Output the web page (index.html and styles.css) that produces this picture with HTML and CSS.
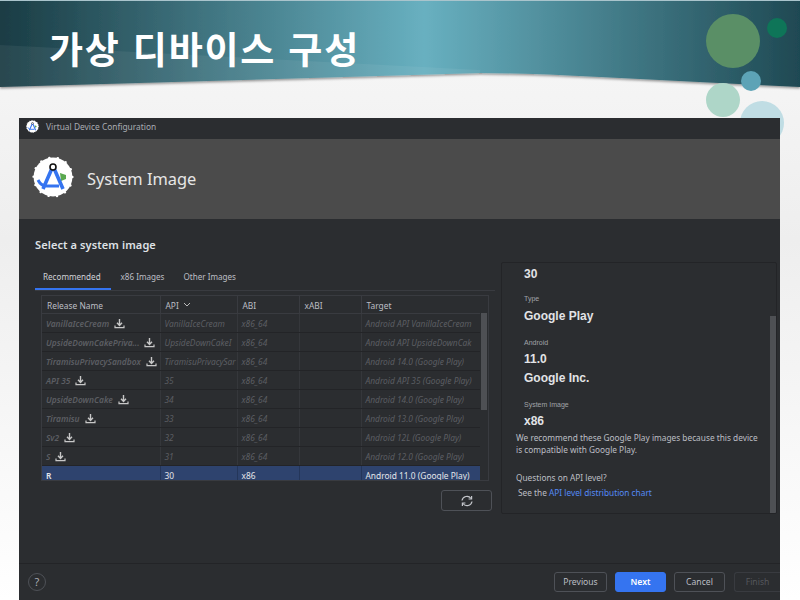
FILE: index.html

```html
<!DOCTYPE html>
<html lang="ko">
<head>
    <meta charset="UTF-8">
    <meta name="viewport" content="width=device-width, initial-scale=1.0">
    <link rel="stylesheet" href="styles.css">
    <title>가상 디바이스 구성</title>
</head>
<body>

<div class="slide">
    <svg class="slide-art" width="800" height="600" viewBox="0 0 800 600">
        <defs>
            <linearGradient id="bannerGrad" x1="0" y1="0" x2="1" y2="0">
                <stop offset="0" stop-color="#1a3c44"/>
                <stop offset="0.53" stop-color="#68b0c0"/>
                <stop offset="1" stop-color="#1f4953"/>
            </linearGradient>
            <linearGradient id="pageGrad" x1="0" y1="0" x2="0" y2="1">
                <stop offset="0" stop-color="#f8f8f8"/>
                <stop offset="0.4" stop-color="#eeeeee"/>
                <stop offset="1" stop-color="#ffffff"/>
            </linearGradient>
            <filter id="bannerShadow" x="-5%" y="-5%" width="110%" height="125%">
                <feDropShadow dx="0" dy="1.5" stdDeviation="1" flood-color="#000" flood-opacity="0.4"/>
            </filter>
        </defs>
        <rect width="800" height="600" fill="url(#pageGrad)"/>
        <path d="M0 0H800V87L600 77Q530 73 480 73L0 87Z" fill="url(#bannerGrad)" filter="url(#bannerShadow)"/>
        <path d="M0 45L480 70L480 73L0 87Z" fill="#fff" opacity="0.06"/>
        <rect width="800" height="1" fill="#a9c4cc"/>
        <circle cx="733" cy="41" r="27" fill="#5a8f66"/>
        <circle cx="777" cy="28" r="10" fill="#0e7558"/>
        <circle cx="751" cy="81" r="10" fill="#5da3b6"/>
        <circle cx="723" cy="100" r="17" fill="#aed6c8"/>
        <circle cx="762" cy="123" r="22" fill="#c0dde4"/>
    </svg>

    <h1 class="slide-title">가상 디바이스 구성</h1>

    <div class="window">
        <div class="titlebar">
            <svg class="titlebar-logo" width="13" height="13" viewBox="0 0 42 42">
                <use href="#studioLogo"/>
            </svg>
            <span>Virtual Device Configuration</span>
        </div>

        <div class="wizard-header">
            <svg width="42" height="42" viewBox="0 0 42 42">
                <g id="studioLogo">
                    <circle cx="21" cy="21" r="19.4" fill="#fff" stroke="#fff" stroke-width="2.4" stroke-linecap="round" stroke-dasharray="0.1 8.6"/>
                    <path d="M34 19l-6-2 1 8 5-2z" fill="#5aa84f"/>
                    <path d="M21 10L11 33M21 10L31 33" stroke="#3574f0" stroke-width="3.6" fill="none"/>
                    <path d="M6 24c2 4 5 6 9 6h12" stroke="#3574f0" stroke-width="3" fill="none"/>
                    <circle cx="21" cy="11" r="3" fill="#fff" stroke="#111" stroke-width="1.6"/>
                </g>
            </svg>
            <span class="wizard-title">System Image</span>
        </div>

        <div class="wizard-body">
            <h2 class="section-title">Select a system image</h2>
            <div class="columns">
                <div class="left-col">
                    <div class="tabs">
                        <span class="tab tab-active">Recommended</span>
                        <span class="tab">x86 Images</span>
                        <span class="tab">Other Images</span>
                    </div>
                    <div class="table-wrap">
                        <table class="images">
                            <colgroup>
                                <col class="col-name"><col class="col-api"><col class="col-abi"><col class="col-xabi"><col class="col-target">
                            </colgroup>
                            <thead>
                                <tr>
                                    <th>Release Name</th>
                                    <th>API <svg class="sort" width="8" height="5" viewBox="0 0 8 5"><path d="M1 1l3 3 3-3" fill="none" stroke="#bbb"/></svg></th>
                                    <th>ABI</th>
                                    <th>xABI</th>
                                    <th>Target</th>
                                </tr>
                            </thead>
                            <tbody>
                                <tr>
                                    <td><span class="rel">VanillaIceCream</span><svg class="dl"><use href="#dlIcon"/></svg></td>
                                    <td>VanillaIceCream</td><td>x86_64</td><td></td><td>Android API VanillaIceCream</td>
                                </tr>
                                <tr>
                                    <td><span class="rel">UpsideDownCakePriva...</span><svg class="dl"><use href="#dlIcon"/></svg></td>
                                    <td>UpsideDownCakeI</td><td>x86_64</td><td></td><td>Android API UpsideDownCak</td>
                                </tr>
                                <tr>
                                    <td><span class="rel">TiramisuPrivacySandbox</span><svg class="dl"><use href="#dlIcon"/></svg></td>
                                    <td>TiramisuPrivacySar</td><td>x86_64</td><td></td><td>Android 14.0 (Google Play)</td>
                                </tr>
                                <tr>
                                    <td><span class="rel">API 35</span><svg class="dl"><use href="#dlIcon"/></svg></td>
                                    <td>35</td><td>x86_64</td><td></td><td>Android API 35 (Google Play)</td>
                                </tr>
                                <tr>
                                    <td><span class="rel">UpsideDownCake</span><svg class="dl"><use href="#dlIcon"/></svg></td>
                                    <td>34</td><td>x86_64</td><td></td><td>Android 14.0 (Google Play)</td>
                                </tr>
                                <tr>
                                    <td><span class="rel">Tiramisu</span><svg class="dl"><use href="#dlIcon"/></svg></td>
                                    <td>33</td><td>x86_64</td><td></td><td>Android 13.0 (Google Play)</td>
                                </tr>
                                <tr>
                                    <td><span class="rel">Sv2</span><svg class="dl"><use href="#dlIcon"/></svg></td>
                                    <td>32</td><td>x86_64</td><td></td><td>Android 12L (Google Play)</td>
                                </tr>
                                <tr>
                                    <td><span class="rel">S</span><svg class="dl"><use href="#dlIcon"/></svg></td>
                                    <td>31</td><td>x86_64</td><td></td><td>Android 12.0 (Google Play)</td>
                                </tr>
                                <tr class="selected">
                                    <td><span class="rel-sel">R</span></td>
                                    <td>30</td><td>x86</td><td></td><td>Android 11.0 (Google Play)</td>
                                </tr>
                            </tbody>
                        </table>
                        <div class="table-scrollbar"><div class="table-thumb"></div></div>
                    </div>
                    <div class="refresh-row">
                        <button class="refresh-btn">
                            <svg width="14" height="14" viewBox="0 0 14 14" fill="none" stroke="#c4c6cb" stroke-width="1.2">
                                <path d="M2 6.5A5 5 0 0 1 11 4.5"/>
                                <path d="M12 7.5A5 5 0 0 1 3 9.5"/>
                                <path d="M11.6 2v3H8.6"/>
                                <path d="M2.4 12V9h3"/>
                            </svg>
                        </button>
                    </div>
                </div>

                <div class="info-panel">
                    <div class="info-scroll">
                        <div class="info-value info-first">30</div>
                        <div class="info-label">Type</div>
                        <div class="info-value">Google Play</div>
                        <div class="info-label">Android</div>
                        <div class="info-value info-version">11.0</div>
                        <div class="info-value info-vendor">Google Inc.</div>
                        <div class="info-label">System Image</div>
                        <div class="info-value info-last">x86</div>
                        <p class="info-text">We recommend these Google Play images because this device is compatible with Google Play.</p>
                        <p class="info-text info-question">Questions on API level?</p>
                        <p class="info-text info-see">See the <a class="info-link">API level distribution chart</a></p>
                    </div>
                    <div class="info-scrollbar"><div class="info-thumb"></div></div>
                </div>
            </div>
        </div>

        <div class="wizard-footer">
            <span class="help-btn">?</span>
            <div class="footer-actions">
                <button class="btn">Previous</button>
                <button class="btn btn-primary">Next</button>
                <button class="btn btn-cancel">Cancel</button>
                <button class="btn btn-disabled">Finish</button>
            </div>
        </div>
    </div>
</div>

<svg width="0" height="0" class="icon-defs">
    <symbol id="dlIcon" viewBox="0 0 11 11">
        <path d="M5.5 1v6M3 4.8l2.5 2.6L8 4.8" fill="none" stroke="#c8c8c8" stroke-width="1.4"/>
        <path d="M1 7.5v2.2h9V7.5" fill="none" stroke="#c8c8c8" stroke-width="1.2"/>
    </symbol>
</svg>

</body>
</html>
```

FILE: styles.css

```css
body {
    margin: 0;
    font-family: "Noto Sans", "Noto Sans CJK KR", sans-serif;
}
button {
    font-family: inherit;
}
.icon-defs {
    position: absolute;
}
.slide {
    position: relative;
    width: 800px;
    height: 600px;
    overflow: hidden;
    display: flex;
    flex-direction: column;
}
.slide-art {
    position: absolute;
    left: 0;
    top: 0;
}
.slide-title {
    position: relative;
    margin: 0;
    height: 118px;
    box-sizing: border-box;
    padding: 22px 0 0 49px;
    font-family: "Noto Sans CJK KR", sans-serif;
    font-size: 37px;
    line-height: 52px;
    font-weight: 700;
    letter-spacing: 1.8px;
    color: #fff;
}

.window {
    position: relative;
    margin-left: 19px;
    width: 761px;
    height: 482px;
    display: flex;
    flex-direction: column;
    background: #2b2d30;
    color: #c9ccd1;
    overflow: hidden;
}
.titlebar {
    height: 21px;
    flex: none;
    box-sizing: border-box;
    padding: 0 0 4px 7px;
    display: flex;
    align-items: center;
    gap: 7px;
    font-size: 8.4px;
    color: #a9acb2;
    background: #2b2d30;
}
.wizard-header {
    height: 80px;
    flex: none;
    box-sizing: border-box;
    padding: 0 0 4px 13px;
    display: flex;
    align-items: center;
    gap: 13px;
    background: #4b4b4b;
}
.wizard-title {
    margin-top: 2px;
    font-size: 16.4px;
    color: #e6e6e6;
}

.wizard-body {
    flex: 1;
    min-height: 0;
    padding: 0 0 0 16px;
}
.section-title {
    margin: 18px 0 0;
    font-size: 11px;
    line-height: 16px;
    font-weight: 600;
    letter-spacing: 0.1px;
    color: #dfe1e5;
}
.columns {
    display: flex;
    margin-top: 1px;
}
.left-col {
    width: 460px;
    flex: none;
}
.tabs {
    display: flex;
    height: 29px;
    margin-top: 7px;
    border-bottom: 1px solid #393b40;
    width: 460px;
}
.tab {
    padding: 9px 9.5px 0;
    font-size: 8.1px;
    line-height: 14px;
    color: #bcbec4;
}
.tab-active {
    box-sizing: border-box;
    width: 76px;
    height: 29px;
    padding: 9px 8px 0;
    border-bottom: 2px solid #3574f0;
    color: #d0d2d6;
}

.table-wrap {
    position: relative;
    margin: 4px 0 0 6px;
    width: 448px;
    height: 186px;
    border: 1px solid #393b40;
    box-sizing: border-box;
    overflow: hidden;
}
.images {
    border-collapse: collapse;
    table-layout: fixed;
    width: 438px;
    font-size: 8.4px;
}
.col-name { width: 118px; }
.col-api { width: 77px; }
.col-abi { width: 62px; }
.col-xabi { width: 62px; }
.col-target { width: 119px; }
.images th {
    height: 15px;
    padding: 2px 0 0 5px;
    text-align: left;
    font-weight: 400;
    color: #bcbec4;
    border-right: 1px solid #393b40;
    border-bottom: 1px solid #393b40;
    white-space: nowrap;
}
.images th:last-child {
    border-right: none;
}
.sort {
    margin-left: 2px;
    vertical-align: 2px;
}
.images td {
    height: 18px;
    padding: 0 0 0 4px;
    font-style: italic;
    color: #5c5e63;
    border-right: 1px solid #35373b;
    border-bottom: 1px solid #232427;
    white-space: nowrap;
    overflow: hidden;
}
.images td:last-child {
    border-right: none;
}
.rel {
    vertical-align: middle;
    font-weight: 600;
}
.dl {
    width: 11px;
    height: 11px;
    margin-left: 5px;
    vertical-align: middle;
}
.selected td {
    height: 14px;
    padding-top: 2px;
    font-style: normal;
    color: #e4e6ea;
    background: #2e436e;
    border-right-color: #24365a;
    border-bottom: none;
}
.rel-sel {
    font-weight: 600;
}
.table-scrollbar {
    position: absolute;
    right: 1px;
    top: 17px;
    bottom: 0;
    width: 6px;
}
.table-thumb {
    height: 97px;
    background: #4e5054;
}
.refresh-row {
    display: flex;
    justify-content: flex-end;
    width: 457px;
    margin-top: 9px;
}
.refresh-btn {
    display: flex;
    justify-content: center;
    align-items: center;
    width: 51px;
    height: 21px;
    padding: 0;
    background: #2b2d30;
    border: 1px solid #4e5157;
    border-radius: 3px;
}

.info-panel {
    position: relative;
    width: 276px;
    height: 252px;
    margin: 8px 0 0 6px;
    box-sizing: border-box;
    border: 1px solid #232427;
    border-radius: 2px;
    overflow: hidden;
}
.info-scroll {
    padding: 0 12px 0 14px;
}
.info-label {
    margin: 0 0 0 8px;
    font-family: "Liberation Sans", sans-serif;
    font-size: 7px;
    line-height: 12px;
    color: #a0a3a8;
}
.info-value {
    margin: 3px 0 13px 8px;
    font-family: "Liberation Sans", sans-serif;
    font-size: 12px;
    line-height: 16px;
    font-weight: 700;
    color: #e2e3e6;
}
.info-first {
    margin-top: 3px;
    margin-bottom: 11px;
}
.info-version {
    margin-top: 2px;
}
.info-vendor {
    margin-top: -10px;
    margin-bottom: 13px;
}
.info-last {
    margin-top: 2px;
    margin-bottom: 3px;
}
.info-text {
    margin: 0;
    font-size: 8.3px;
    line-height: 12px;
    color: #bcbec4;
}
.info-question {
    margin-top: 16px;
}
.info-see {
    margin-top: 3px;
    padding-left: 2px;
}
.info-link {
    color: #548af7;
}
.info-scrollbar {
    position: absolute;
    right: 0;
    top: 53px;
    bottom: 0;
    width: 6px;
}
.info-thumb {
    height: 100%;
    background: #4e5054;
}

.wizard-footer {
    height: 36px;
    flex: none;
    display: flex;
    align-items: center;
    justify-content: space-between;
    border-top: 1px solid #232427;
}
.help-btn {
    width: 16px;
    height: 16px;
    margin-left: 9px;
    border: 1px solid #4e5157;
    border-radius: 50%;
    text-align: center;
    font-size: 11px;
    line-height: 16px;
    color: #a9acb2;
}
.footer-actions {
    display: flex;
    gap: 8px;
}
.btn {
    width: 53px;
    height: 20px;
    padding: 0;
    font-size: 8.6px;
    color: #bcbec4;
    background: #2b2d30;
    border: 1px solid #4e5157;
    border-radius: 3px;
}
.btn-primary {
    width: 51px;
    font-weight: 600;
    color: #fff;
    background: #3574f0;
    border-color: #3574f0;
}
.btn-cancel {
    width: 51px;
}
.btn-disabled {
    width: 46px;
    margin-left: 1px;
    color: #55575c;
    border-color: #393b40;
    border-right: none;
    border-radius: 3px 0 0 3px;
}
```
